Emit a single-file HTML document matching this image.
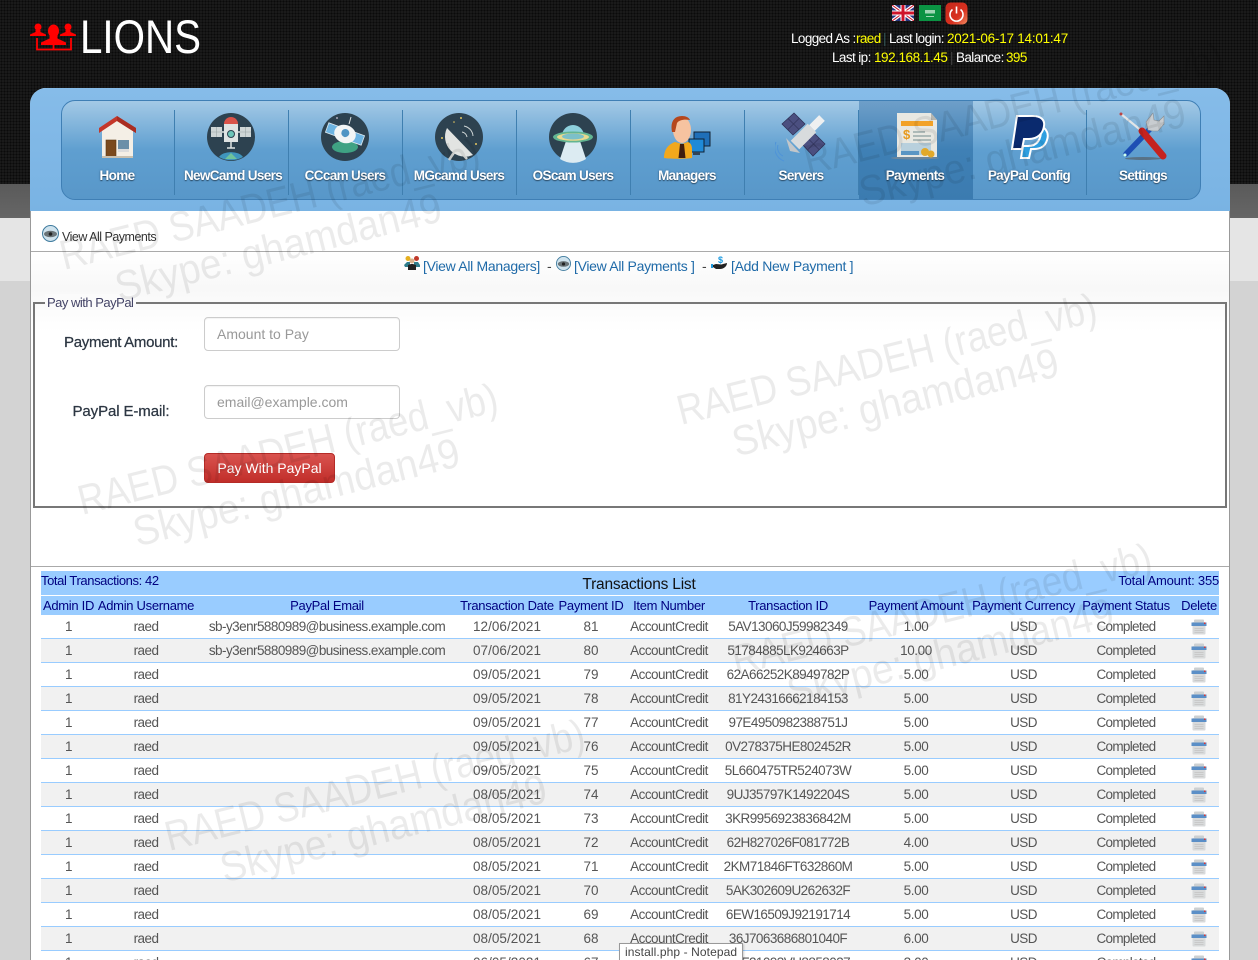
<!DOCTYPE html>
<html><head><meta charset="utf-8"><title>Payments</title>
<style>
*{box-sizing:border-box}
html,body{margin:0;padding:0;width:1258px;height:960px;overflow:hidden;background:#d3d3d3;font-family:"Liberation Sans",sans-serif}
#wrap{position:relative;width:1258px;height:960px;overflow:hidden}
.a{position:absolute}
#top{left:0;top:0;width:1258px;height:184px;background-color:#1b1b1b;background-image:radial-gradient(circle,#0a0a0a 0.9px,transparent 1.1px);background-size:3px 3px}
#b1{left:0;top:184px;width:1258px;height:34px;background:linear-gradient(#5a5a5a,#666)}
#b2{left:0;top:218px;width:1258px;height:63px;background:#e5e5e5}
#panel{left:30px;top:88px;width:1200px;height:872px;background:#fff;border-left:1px solid #999;border-right:1px solid #999;border-radius:16px 16px 0 0}
#blue{left:30px;top:88px;width:1200px;height:123px;background:linear-gradient(#86bce9,#79b3e3);border-radius:16px 16px 0 0}
#nav{left:61px;top:100px;width:1140px;height:100px;border:1px solid #3f7fb5;border-radius:14px;background:linear-gradient(#a3c9e6,#5f9fd0 50%,#5897c9);overflow:hidden}
#act{left:797px;top:0;width:114px;height:98px;background:linear-gradient(#6e9fc9,#3f80b5 50%,#3b7bb0)}
.sep{position:absolute;top:9px;width:1px;height:85px;background:#3f7fb0}
.lb{position:absolute;top:167px;width:114px;text-align:center;color:#fff;font-size:13.5px;font-weight:bold;letter-spacing:-.65px;text-shadow:0 1px 1px rgba(0,0,0,.45),0 0 2px rgba(30,70,110,.6);line-height:18px}
.ic{position:absolute;top:111px;width:52px;height:52px}
.info{position:absolute;color:#fff;font-size:13.5px;letter-spacing:-.6px;line-height:18px;white-space:nowrap}
.y{color:#ff0}
.lnk{color:#1f6aa8;font-size:14px;letter-spacing:-.3px;white-space:nowrap;line-height:18px}
.inp{left:204px;width:196px;height:34px;border:1px solid #ccc;border-radius:4px;background:#fff;color:#999;font-size:14px;line-height:32px;padding-left:12px;box-shadow:inset 0 1px 1px rgba(0,0,0,.05)}
.lab{left:40px;width:162px;text-align:center;font-size:15px;color:#2c3642;line-height:18px;letter-spacing:-.3px;-webkit-text-stroke:.25px #2c3642}
#tb{left:41px;top:571px;width:1178px;height:24px;background:#99ccff;color:#000080;font-size:13px;line-height:20px;letter-spacing:-.2px}
table{position:absolute;left:41px;top:596px;width:1178px;table-layout:fixed;border-collapse:separate;border-spacing:0}
th{height:19px;padding:0;background:#99ccff;color:#000080;font-weight:normal;font-size:13px;letter-spacing:-.3px;white-space:nowrap;text-align:center;overflow:visible}
td{height:24px;padding:0;border-bottom:1px solid #99ccff;text-align:center;color:#555;font-size:13.5px;letter-spacing:-.55px;white-space:nowrap}
td:nth-child(4),td:nth-child(5){letter-spacing:.05px}
td:nth-child(8){letter-spacing:-.4px}
td:nth-child(10){letter-spacing:-.7px}
th:last-child,td:last-child{padding-left:6px}
tbody tr:nth-child(even) td{background:#f1f1f1}
tbody tr:nth-child(odd) td{background:#fff}
td svg{display:block;margin:0 auto}
</style></head><body><div id="wrap">
<div class="a" id="top"></div><div class="a" id="b1"></div><div class="a" id="b2"></div>
<div class="a" id="panel"></div><div class="a" id="blue"></div>

<svg class="a" style="left:30px;top:20px" width="48" height="36" viewBox="0 0 48 36"><g fill="#f00"><circle cx="8" cy="7" r="3.500"/><path d="M0 16v-1.500l5.500-2.500v-2h5v2l5.500 2.500V16z"/><circle cx="38" cy="7" r="3.500"/><path d="M30 16v-1.500l5.500-2.500v-2h5v2l5.500 2.500V16z"/><ellipse cx="23.500" cy="11" rx="5.500" ry="6.500"/><path d="M11 25v-2.500l8.500-4v-3h8v3l8.500 4V25z"/></g><path d="M7 18V29.500H41V18M23.500 25V29.500" fill="none" stroke="#f00" stroke-width="1.800"/></svg>
<svg class="a" style="left:78px;top:10px" width="130" height="50"><text x="2" y="43" font-family="Liberation Sans" font-size="47" fill="#fff" textLength="121" lengthAdjust="spacingAndGlyphs">LIONS</text></svg>

<svg class="a" style="left:892px;top:5px" width="22" height="16" viewBox="0 0 22 16"><rect width="22" height="16" fill="#27357f"/><path d="M0 0L22 16M22 0L0 16" stroke="#fff" stroke-width="3.400"/><path d="M0 0L22 16M22 0L0 16" stroke="#cf142b" stroke-width="1"/><path d="M11 0V16M0 8H22" stroke="#fff" stroke-width="5"/><path d="M11 0V16M0 8H22" stroke="#cf142b" stroke-width="3"/></svg>
<svg class="a" style="left:919px;top:5px" width="22" height="16" viewBox="0 0 22 16"><rect width="22" height="16" fill="#0b9343"/><rect x="6" y="5" width="10" height="3.500" fill="#9fd6b4"/><rect x="7" y="11" width="8" height="1" fill="#9fd6b4"/></svg>
<svg class="a" style="left:945px;top:2px" width="23" height="23" viewBox="0 0 23 23"><defs><linearGradient id="pw" x1="0" y1="0" x2="1" y2="1"><stop offset="0" stop-color="#c5291c"/><stop offset=".6" stop-color="#d8301f"/><stop offset="1" stop-color="#f08a60"/></linearGradient></defs><rect x=".5" y=".5" width="22" height="22" rx="5" fill="url(#pw)"/><path d="M7.500 7.500a6.500 6.500 0 1 0 8 0" fill="none" stroke="#fff" stroke-width="1.600"/><path d="M11.500 4.500v7" stroke="#fff" stroke-width="1.600"/></svg>

<span class="info" style="left:791px;top:30px">Logged As :</span><span class="info y" style="left:856px;top:30px">raed</span><span class="info" style="left:883px;top:30px;color:#355">|</span><span class="info" style="left:889px;top:30px">Last login:</span><span class="info y" style="left:947px;top:30px;letter-spacing:-.23px">2021-06-17 14:01:47</span>
<span class="info" style="left:832px;top:49px">Last ip:</span><span class="info y" style="left:874px;top:49px;letter-spacing:-.45px">192.168.1.45</span><span class="info" style="left:950px;top:49px;color:#444">|</span><span class="info" style="left:956px;top:49px">Balance:</span><span class="info y" style="left:1006px;top:49px">395</span>

<div class="a" id="nav"><div class="a" id="act"></div>
<i class="sep" style="left:112px"></i><i class="sep" style="left:226px"></i><i class="sep" style="left:340px"></i><i class="sep" style="left:454px"></i><i class="sep" style="left:568px"></i><i class="sep" style="left:682px"></i><i class="sep" style="left:796px"></i><i class="sep" style="left:1024px"></i></div>

<!-- Home -->
<svg class="ic" style="left:91px" viewBox="0 0 52 52"><path d="M11 17L26 8 42 17V46H11z" fill="#f4efe6"/><path d="M8 17L26 5 45 17v5L26 10 8 22z" fill="#c4372a"/><path d="M26 5L45 17v5L26 10z" fill="#a92d22"/><rect x="15" y="29" width="10" height="17" fill="#7a4a1e" stroke="#5d3713" stroke-width=".6"/><rect x="27" y="29" width="11" height="9" fill="#6b8fa8"/><rect x="27" y="38" width="11" height="3" fill="#ddd"/><rect x="11" y="45" width="31" height="2" fill="#c8c0b0"/></svg>
<!-- NewCamd -->
<svg class="ic" style="left:205px" viewBox="0 0 52 52"><circle cx="26" cy="26" r="24" fill="#2d4250"/><path d="M14 46a13 8 0 0 1 24 0 24 24 0 0 1-24 0z" fill="#3f95bd"/><path d="M20 48l6-6 6 6z" fill="#6fc39b"/><path d="M19 13a7 7 0 0 1 14 0z" fill="#d9534a"/><rect x="19" y="13" width="14" height="18" fill="#dfe3e3"/><circle cx="26" cy="23" r="3.500" fill="#6cc4b8" stroke="#2d4250"/><rect x="6" y="16" width="11" height="10" fill="#cfd6d6"/><rect x="35" y="16" width="11" height="10" fill="#cfd6d6"/><path d="M11.500 16v10M40.500 16v10M6 21h11M35 21h11" stroke="#9aa5a5" stroke-width=".6"/><path d="M17 21h2M33 21h2M26 31v6M22 37h8" stroke="#dfe3e3" stroke-width="1.500"/></svg>
<!-- CCcam -->
<svg class="ic" style="left:319px" viewBox="0 0 52 52"><circle cx="26" cy="26" r="24" fill="#2d4250"/><ellipse cx="26" cy="36" rx="13" ry="6" fill="#3fa283"/><g transform="rotate(20 26 23)"><rect x="7" y="18" width="38" height="10" fill="#6cb4e2" stroke="#dce9f0" stroke-width=".8"/><ellipse cx="26" cy="23" rx="11" ry="9" fill="#f2f5f5"/><circle cx="26" cy="22" r="4" fill="#4f95c4"/></g><path d="M30 13l2-7" stroke="#dfe3e3"/><circle cx="18" cy="7" r="1" fill="#aab"/></svg>
<!-- MGcamd -->
<svg class="ic" style="left:433px" viewBox="0 0 52 52"><circle cx="26" cy="26" r="24" fill="#2d4250"/><path d="M24 37L16 49M24 37L34 48" stroke="#d4d7d5" stroke-width="2.500"/><path d="M14 17A20 20 0 0 0 40 44Z" fill="#e2e4e2"/><path d="M29 21a6 6 0 0 1 5 5M31 15a11 11 0 0 1 9 10" stroke="#cfd6d6" fill="none"/><g fill="#e6c860"><circle cx="9" cy="27" r="1"/><circle cx="43" cy="33" r="1"/><circle cx="28" cy="7" r="1"/><circle cx="21" cy="11" r=".8"/></g></svg>
<!-- OScam -->
<svg class="ic" style="left:547px" viewBox="0 0 52 52"><circle cx="26" cy="26" r="24" fill="#2d4250"/><path d="M19 30h14l6 18a24 24 0 0 1-26 0z" fill="#dcebf2"/><path d="M15 25a11 11 0 0 1 22 0z" fill="#8dd0dc"/><ellipse cx="26" cy="26" rx="20" ry="5.500" fill="#62b592"/><ellipse cx="26" cy="26" rx="16" ry="3.800" fill="#e9d98e"/><ellipse cx="26" cy="25.500" rx="11" ry="3" fill="#7cc0c8"/></svg>
<!-- Managers -->
<svg class="ic" style="left:661px" viewBox="0 0 52 52"><rect x="33" y="21" width="16" height="14" fill="#1f6fb8" stroke="#123"/><rect x="28" y="28" width="15" height="13" fill="#1f8ad8" stroke="#123"/><path d="M32 41h7v3h-7z" fill="#345"/><path d="M3 47c0-9 5-14 11-16l7 2 6-2c3 1 4 4 4 7v9c-6 1-22 1-28 0z" fill="#f2a81c"/><path d="M19 33h4l1.500 14h-7z" fill="#3f1d0e"/><ellipse cx="21" cy="19" rx="9" ry="13" fill="#f6c3a0"/><path d="M11 21C9 11 13 5 21 5c4 0 7 1.500 8 4-6-1-11 0-13 3l-2 9z" fill="#b5471d"/></svg>
<!-- Servers -->
<svg class="ic" style="left:775px" viewBox="0 0 52 52"><path d="M3 34a9 9 0 0 0 5 11M1 31a14 14 0 0 0 8 19" stroke="#4f94d8" fill="none"/><path d="M19 2L30 13 18 24 7 13zM39 22L50 33 38 45 27 33z" fill="#4b4f80" stroke="#2f3258" stroke-width=".8"/><path d="M13 7.500L24 18.500M24 7.500L13 18.500M33 27.500L44 38.500M44 27.500L33 38.500" stroke="#2f3258" stroke-width=".6"/><path d="M20 34L37 17" stroke="#d8dbdd" stroke-width="12"/><path d="M37 17L47 7" stroke="#eef0f1" stroke-width="8"/><path d="M11 27L25 42 15 40z" fill="#c3c7ca"/></svg>
<!-- Payments -->
<svg class="ic" style="left:889px" viewBox="0 0 52 52"><ellipse cx="26" cy="47" rx="24" ry="1.500" fill="#6d879c"/><path d="M8 2H42L48 9V46H8z" fill="#e8e8e2"/><path d="M12 10h32v5H12z" fill="#f2a228"/><path d="M42 2l6 7h-6z" fill="#b6b6b0"/><text x="14" y="28" font-size="13" font-weight="bold" fill="#e89a1d" font-family="Liberation Sans">$</text><path d="M24 21h12M24 25h18M24 29h18" stroke="#9aa" stroke-width="1.500"/><rect x="12" y="32" width="30" height="12" fill="#b8d0dd"/><rect x="12" y="40" width="18" height="4" fill="#5a96c4"/><circle cx="36" cy="41" r="4" fill="#e2a92a"/><circle cx="42" cy="43" r="3.500" fill="#e2a92a"/></svg>
<!-- PayPal -->
<svg class="ic" style="left:1003px" viewBox="0 0 52 52"><path d="M38 15c6 3 8 8 6 14-2 7-7 9-13 9h-3l-2 9h-8l2-12H25c9 0 14-6 13-20z" fill="#2e9fe0" stroke="#fff" stroke-width="2"/><path d="M14 5H30c8 0 12 4 11 10-1 8-7 13-15 13h-5l-2 10H9z" fill="#0a2a6e" stroke="#fff" stroke-width="2"/></svg>
<!-- Settings -->
<svg class="ic" style="left:1117px" viewBox="0 0 52 52"><ellipse cx="26" cy="47.500" rx="18" ry="1.500" fill="#555" opacity=".6"/><path d="M4 3L26 21" stroke="#e2e5e7" stroke-width="2.200"/><circle cx="4" cy="3" r="1.500" fill="#b44"/><path d="M34 17L9 43" stroke="#1d4fb4" stroke-width="5.500" stroke-linecap="round"/><path d="M31 19l-2-8 7-9 1 7 5 1 5-5v8l-6 7h-5z" fill="#c8ccd0" stroke="#8a8e92" stroke-width=".6"/><circle cx="8" cy="44" r="1.500" fill="#cfe"/><path d="M25 20L46 45" stroke="#c5221f" stroke-width="7" stroke-linecap="round"/></svg>

<div class="lb" style="left:60px">Home</div><div class="lb" style="left:176px">NewCamd Users</div><div class="lb" style="left:288px">CCcam Users</div><div class="lb" style="left:402px">MGcamd Users</div><div class="lb" style="left:516px">OScam Users</div><div class="lb" style="left:630px">Managers</div><div class="lb" style="left:744px">Servers</div><div class="lb" style="left:858px">Payments</div><div class="lb" style="left:972px">PayPal Config</div><div class="lb" style="left:1086px">Settings</div>

<svg class="a" style="left:42px;top:225px" width="17" height="17" viewBox="0 0 17 17"><circle cx="8.500" cy="8.500" r="8" fill="#cfe3ee" stroke="#3f7b9e"/><ellipse cx="8.500" cy="9" rx="6.500" ry="3.200" fill="#6a7478"/><circle cx="8.500" cy="9" r="1.800" fill="#222"/></svg>
<div class="a" style="left:62px;top:228px;font-size:12.500px;letter-spacing:-.5px;color:#333;line-height:18px">View All Payments</div>
<div class="a" style="left:31px;top:251px;width:1198px;height:1px;background:#aaa"></div>
<div class="a" style="left:31px;top:252px;width:1198px;height:80px;background:linear-gradient(#fff,#f8f8f8 45%,#fff)"></div>

<svg class="a" style="left:404px;top:255px" width="16" height="16" viewBox="0 0 16 16"><circle cx="4" cy="3.500" r="2.500" fill="#e6b020"/><circle cx="12.500" cy="3.500" r="2.500" fill="#c0392b"/><path d="M0 10l3-3h3v5H1zM10 7h4l2 3v2h-6z" fill="#2f7d8c"/><circle cx="8" cy="6" r="2.500" fill="#d8b08c"/><path d="M4 15V10l3-1h2l3 1v5z" fill="#222"/></svg>
<div class="a lnk" style="left:423px;top:257px">[View All Managers]</div>
<div class="a lnk" style="left:547px;top:257px;color:#444">-</div>
<svg class="a" style="left:556px;top:256px" width="15" height="15" viewBox="0 0 17 17"><circle cx="8.500" cy="8.500" r="8" fill="#cfe3ee" stroke="#3f7b9e"/><ellipse cx="8.500" cy="9" rx="6.500" ry="3.200" fill="#6a7478"/><circle cx="8.500" cy="9" r="1.800" fill="#222"/></svg>
<div class="a lnk" style="left:574px;top:257px">[View All Payments ]</div>
<div class="a lnk" style="left:702px;top:257px;color:#444">-</div>
<svg class="a" style="left:711px;top:255px" width="16" height="16" viewBox="0 0 16 16"><text x="7" y="8" font-size="9" font-weight="bold" fill="#1b9ae0" font-family="Liberation Sans">$</text><path d="M0 10h2l3-1c3 0 5 1 7 0l4-1c0 3-3 6-7 6H5l-3-2H0z" fill="#222"/><rect y="9" width="2" height="4" fill="#1b9ae0"/></svg>
<div class="a lnk" style="left:731px;top:257px">[Add New Payment ]</div>

<div class="a" style="left:33px;top:302px;width:1194px;height:206px;border:2px solid #777"></div>
<div class="a" style="left:45px;top:294px;width:91px;height:16px;background:#fbfbfb"></div>
<div class="a" style="left:47px;top:294px;font-size:13px;letter-spacing:-.5px;color:#446;line-height:18px">Pay with PayPal</div>
<div class="a lab" style="top:334px">Payment Amount:</div>
<div class="a lab" style="top:403px;letter-spacing:-.1px">PayPal E-mail:</div>
<div class="a inp" style="top:317px">Amount to Pay</div>
<div class="a inp" style="top:385px">email@example.com</div>
<div class="a" style="left:204px;top:453px;width:131px;height:30px;border-radius:4px;background:linear-gradient(#d9534f,#c12e2a);border:1px solid #b52b27;color:#fff;font-size:14px;line-height:28px;text-align:center">Pay With PayPal</div>
<div class="a" style="left:31px;top:566px;width:1198px;height:1px;background:#aaa"></div>

<div class="a" id="tb"><span class="a" style="left:0;top:0;white-space:nowrap;letter-spacing:-.4px">Total Transactions: 42</span><span class="a" style="left:0;width:1196px;top:3px;text-align:center;color:#111;font-size:15.500px;line-height:22px">Transactions List</span><span class="a" style="right:0;top:0;white-space:nowrap">Total Amount: 355</span></div>

<svg width="0" height="0" style="position:absolute"><defs><symbol id="d" viewBox="0 0 16 16"><rect x="1.500" y="3" width="13" height="12.500" rx="1" fill="#d8dadb"/><rect x="3" y="0.500" width="10" height="3" rx="1" fill="#ccd0d2"/><rect x=".5" y="3.500" width="15" height="3.500" fill="#5b8fc7"/><rect x="13" y="3.500" width="1.500" height="1.500" fill="#d33"/><path d="M3.500 9.500h9M3.500 11.500h9M3.500 13.500h9" stroke="#c4c4c4" stroke-width=".7"/></symbol></defs></svg>

<table><colgroup><col style="width:55px"><col style="width:100px"><col style="width:262px"><col style="width:98px"><col style="width:70px"><col style="width:86px"><col style="width:152px"><col style="width:104px"><col style="width:111px"><col style="width:94px"><col style="width:46px"></colgroup>
<thead><tr><th>Admin ID</th><th>Admin Username</th><th>PayPal Email</th><th>Transaction Date</th><th>Payment ID</th><th>Item Number</th><th>Transaction ID</th><th>Payment Amount</th><th>Payment Currency</th><th>Payment Status</th><th>Delete</th></tr></thead>
<tbody>
<tr><td>1</td><td>raed</td><td>sb-y3enr5880989@business.example.com</td><td>12/06/2021</td><td>81</td><td>AccountCredit</td><td>5AV13060J59982349</td><td>1.00</td><td>USD</td><td>Completed</td><td><svg width="16" height="16"><use href="#d"/></svg></td></tr>
<tr><td>1</td><td>raed</td><td>sb-y3enr5880989@business.example.com</td><td>07/06/2021</td><td>80</td><td>AccountCredit</td><td>51784885LK924663P</td><td>10.00</td><td>USD</td><td>Completed</td><td><svg width="16" height="16"><use href="#d"/></svg></td></tr>
<tr><td>1</td><td>raed</td><td></td><td>09/05/2021</td><td>79</td><td>AccountCredit</td><td>62A66252K8949782P</td><td>5.00</td><td>USD</td><td>Completed</td><td><svg width="16" height="16"><use href="#d"/></svg></td></tr>
<tr><td>1</td><td>raed</td><td></td><td>09/05/2021</td><td>78</td><td>AccountCredit</td><td>81Y24316662184153</td><td>5.00</td><td>USD</td><td>Completed</td><td><svg width="16" height="16"><use href="#d"/></svg></td></tr>
<tr><td>1</td><td>raed</td><td></td><td>09/05/2021</td><td>77</td><td>AccountCredit</td><td>97E4950982388751J</td><td>5.00</td><td>USD</td><td>Completed</td><td><svg width="16" height="16"><use href="#d"/></svg></td></tr>
<tr><td>1</td><td>raed</td><td></td><td>09/05/2021</td><td>76</td><td>AccountCredit</td><td>0V278375HE802452R</td><td>5.00</td><td>USD</td><td>Completed</td><td><svg width="16" height="16"><use href="#d"/></svg></td></tr>
<tr><td>1</td><td>raed</td><td></td><td>09/05/2021</td><td>75</td><td>AccountCredit</td><td>5L660475TR524073W</td><td>5.00</td><td>USD</td><td>Completed</td><td><svg width="16" height="16"><use href="#d"/></svg></td></tr>
<tr><td>1</td><td>raed</td><td></td><td>08/05/2021</td><td>74</td><td>AccountCredit</td><td>9UJ35797K1492204S</td><td>5.00</td><td>USD</td><td>Completed</td><td><svg width="16" height="16"><use href="#d"/></svg></td></tr>
<tr><td>1</td><td>raed</td><td></td><td>08/05/2021</td><td>73</td><td>AccountCredit</td><td>3KR9956923836842M</td><td>5.00</td><td>USD</td><td>Completed</td><td><svg width="16" height="16"><use href="#d"/></svg></td></tr>
<tr><td>1</td><td>raed</td><td></td><td>08/05/2021</td><td>72</td><td>AccountCredit</td><td>62H827026F081772B</td><td>4.00</td><td>USD</td><td>Completed</td><td><svg width="16" height="16"><use href="#d"/></svg></td></tr>
<tr><td>1</td><td>raed</td><td></td><td>08/05/2021</td><td>71</td><td>AccountCredit</td><td>2KM71846FT632860M</td><td>5.00</td><td>USD</td><td>Completed</td><td><svg width="16" height="16"><use href="#d"/></svg></td></tr>
<tr><td>1</td><td>raed</td><td></td><td>08/05/2021</td><td>70</td><td>AccountCredit</td><td>5AK302609U262632F</td><td>5.00</td><td>USD</td><td>Completed</td><td><svg width="16" height="16"><use href="#d"/></svg></td></tr>
<tr><td>1</td><td>raed</td><td></td><td>08/05/2021</td><td>69</td><td>AccountCredit</td><td>6EW16509J92191714</td><td>5.00</td><td>USD</td><td>Completed</td><td><svg width="16" height="16"><use href="#d"/></svg></td></tr>
<tr><td>1</td><td>raed</td><td></td><td>08/05/2021</td><td>68</td><td>AccountCredit</td><td>36J7063686801040F</td><td>6.00</td><td>USD</td><td>Completed</td><td><svg width="16" height="16"><use href="#d"/></svg></td></tr>
<tr><td>1</td><td>raed</td><td></td><td>06/05/2021</td><td>67</td><td>AccountCredit</td><td>2KF21093VH8858037</td><td>3.00</td><td>USD</td><td>Completed</td><td><svg width="16" height="16"><use href="#d"/></svg></td></tr>
</tbody></table>

<div class="a" style="left:619px;top:943px;width:124px;height:17px;background:#fff;border:1px solid #999;border-bottom:0;box-shadow:1px 1px 2px rgba(0,0,0,.2);font-size:12px;line-height:16px;color:#444;padding-left:5px;letter-spacing:.1px;white-space:nowrap">install.php - Notepad</div>

<svg class="a" style="left:0;top:0;pointer-events:none" width="1258" height="960" font-family="Liberation Sans" fill="#000" fill-opacity=".08">
<g transform="translate(64 270) rotate(-14)"><text font-size="42" textLength="431" lengthAdjust="spacingAndGlyphs">RAED SAADEH (raed_vb)</text><text x="46" y="44" font-size="42" textLength="335" lengthAdjust="spacingAndGlyphs">Skype: ghamdan49</text></g>
<g transform="translate(808 175) rotate(-14)"><text font-size="42" textLength="431" lengthAdjust="spacingAndGlyphs">RAED SAADEH (raed_vb)</text><text x="46" y="44" font-size="42" textLength="335" lengthAdjust="spacingAndGlyphs">Skype: ghamdan49</text></g>
<g transform="translate(681 425) rotate(-14)"><text font-size="42" textLength="431" lengthAdjust="spacingAndGlyphs">RAED SAADEH (raed_vb)</text><text x="46" y="44" font-size="42" textLength="335" lengthAdjust="spacingAndGlyphs">Skype: ghamdan49</text></g>
<g transform="translate(82 515) rotate(-14)"><text font-size="42" textLength="431" lengthAdjust="spacingAndGlyphs">RAED SAADEH (raed_vb)</text><text x="46" y="44" font-size="42" textLength="335" lengthAdjust="spacingAndGlyphs">Skype: ghamdan49</text></g>
<g transform="translate(736 675) rotate(-14)"><text font-size="42" textLength="431" lengthAdjust="spacingAndGlyphs">RAED SAADEH (raed_vb)</text><text x="46" y="44" font-size="42" textLength="335" lengthAdjust="spacingAndGlyphs">Skype: ghamdan49</text></g>
<g transform="translate(169 851) rotate(-14)"><text font-size="42" textLength="431" lengthAdjust="spacingAndGlyphs">RAED SAADEH (raed_vb)</text><text x="46" y="44" font-size="42" textLength="335" lengthAdjust="spacingAndGlyphs">Skype: ghamdan49</text></g>
</svg>
</div></body></html>
